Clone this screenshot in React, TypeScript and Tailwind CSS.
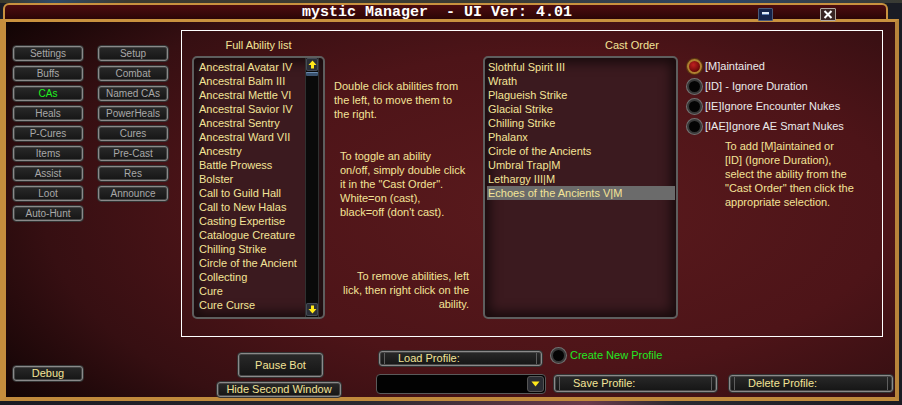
import React from "react";

const abilities = [
  "Ancestral Avatar IV",
  "Ancestral Balm III",
  "Ancestral Mettle VI",
  "Ancestral Savior IV",
  "Ancestral Sentry",
  "Ancestral Ward VII",
  "Ancestry",
  "Battle Prowess",
  "Bolster",
  "Call to Guild Hall",
  "Call to New Halas",
  "Casting Expertise",
  "Catalogue Creature",
  "Chilling Strike",
  "Circle of the Ancient",
  "Collecting",
  "Cure",
  "Cure Curse",
];

const castOrder = [
  "Slothful Spirit III",
  "Wrath",
  "Plagueish Strike",
  "Glacial Strike",
  "Chilling Strike",
  "Phalanx",
  "Circle of the Ancients",
  "Umbral Trap|M",
  "Lethargy III|M",
  "Echoes of the Ancients V|M",
];

const navButtons: { label: string; active?: boolean }[] = [
  { label: "Settings" },
  { label: "Setup" },
  { label: "Buffs" },
  { label: "Combat" },
  { label: "CAs", active: true },
  { label: "Named CAs" },
  { label: "Heals" },
  { label: "PowerHeals" },
  { label: "P-Cures" },
  { label: "Cures" },
  { label: "Items" },
  { label: "Pre-Cast" },
  { label: "Assist" },
  { label: "Res" },
  { label: "Loot" },
  { label: "Announce" },
  { label: "Auto-Hunt" },
];

function Btn({ children, className = "" }: { children: React.ReactNode; className?: string }) {
  return (
    <div
      className={`flex items-center justify-center rounded-[4px] border border-[#333] bg-[linear-gradient(#2a2a2a,#141414)] shadow-[inset_0_0_0_1px_#8a8a8a,inset_0_0_0_2px_#454545] ${className}`}
    >
      {children}
    </div>
  );
}

function ProfileBtn({ label, className = "" }: { label: string; className?: string }) {
  return (
    <div
      className={`flex rounded-[4px] border border-[#333] bg-[linear-gradient(#2a2a2a,#141414)] shadow-[inset_0_0_0_1px_#8a8a8a,inset_0_0_0_2px_#454545] ${className}`}
    >
      <div className="mx-[5px] my-[2px] flex flex-1 items-center border-x border-[#5e5e5e] pl-[13px] text-[11px] text-[#f3e497]">
        {label}
      </div>
    </div>
  );
}

function Radio({ selected = false }: { selected?: boolean }) {
  return selected ? (
    <div className="h-[15px] w-[15px] flex-none rounded-full border-2 border-[#b08030] bg-[radial-gradient(circle_at_40%_35%,#c02020,#6a0808_70%)] shadow-[0_0_0_1px_#5a3a10]" />
  ) : (
    <div className="h-[15px] w-[15px] flex-none rounded-full border-2 border-[#383838] bg-[#040404] shadow-[0_0_0_1px_#707070]" />
  );
}

function Arrow({ down = false }: { down?: boolean }) {
  return (
    <div className="flex h-[13px] w-[12px] items-center justify-center rounded-[2px] bg-[#2a2e36] shadow-[inset_0_0_0_1px_#454a55]">
      <svg width="9" height="9" viewBox="0 0 9 9" className={down ? "rotate-180" : ""}>
        <polygon points="4.5,0.5 8.5,5 6,5 6,8.5 3,8.5 3,5 0.5,5" fill="#ffe81a" />
      </svg>
    </div>
  );
}

function ListBox({
  items,
  width,
  scroll,
  selectedIndex,
  padLeft,
}: {
  items: string[];
  width: string;
  scroll?: boolean;
  selectedIndex?: number;
  padLeft: string;
}) {
  return (
    <div
      className={`${width} flex h-[263px] overflow-hidden rounded-[5px] border-2 border-[#5e5e5e] bg-[#3b1a1f] shadow-[inset_0_0_12px_5px_rgba(0,0,0,0.6)]`}
    >
      <div className="flex-1 overflow-hidden whitespace-nowrap pt-[2px] text-[11px] leading-[14px] text-[#f3e497]">
        {items.map((it, i) =>
          i === selectedIndex ? (
            <div key={it} className="mr-[1px] ml-[2px] bg-[#6b6b6b] pl-[1px]">
              {it}
            </div>
          ) : (
            <div key={it} className={padLeft}>
              {it}
            </div>
          )
        )}
      </div>
      {scroll && (
        <div className="mr-[4px] flex w-[14px] flex-col items-center justify-between border-x border-[#303030] bg-[#0a0a0a]">
          <div className="flex flex-col items-center">
            <Arrow />
            <div className="mt-[1px] h-[4px] w-[12px] rounded-[1px] bg-[#3b5370] shadow-[inset_0_1px_0_#6c8cb0]" />
          </div>
          <div className="mb-[1px]">
            <Arrow down />
          </div>
        </div>
      )}
    </div>
  );
}

export default function App() {
  return (
    <div className="relative h-[405px] w-[902px] overflow-hidden bg-[#1a1c24] font-['Liberation_Sans',Arial,sans-serif]">
      {/* background strip */}
      <div className="h-[3px] bg-[linear-gradient(90deg,#3a3828,#2e4a68_6%,#3c3a30_14%,#3a3a34_55%,#2c4566_80%,#3a3a32)]" />

      {/* title bar */}
      <div className="ml-[3px] flex h-[16px] w-[885px] items-center rounded-t-[6px] border-2 border-b-0 border-[#c9923f] bg-[linear-gradient(#4c0c0f,#2c0506)]">
        <div className="w-[297px] flex-none" />
        <div className="flex-none font-['Liberation_Mono',monospace] text-[15px] leading-none font-bold whitespace-pre text-white">
          mystic Manager  - UI Ver: 4.01
        </div>
        <div className="flex-1" />
        <div className="mt-[4px] flex h-[13px] w-[15px] flex-none items-start justify-center rounded-[1px] border border-[#4a5a78] bg-[#15234a] pt-[3px]">
          <div className="h-[2px] w-[7px] bg-[#dfe8f5] shadow-[0_1px_0_#5a7ab0]" />
        </div>
        <div className="w-[47px] flex-none" />
        <div className="mt-[4px] flex h-[13px] w-[16px] flex-none items-center justify-center rounded-[1px] border border-[#b0a8a0] bg-[#3a2624]">
          <svg width="10" height="9" viewBox="0 0 10 9">
            <path d="M1.5 1 L8.5 8 M8.5 1 L1.5 8" stroke="#ffffff" strokeWidth="2" />
          </svg>
        </div>
        <div className="w-[50px] flex-none" />
      </div>

      {/* main frame */}
      <div className="flex h-[382px] w-[899px] flex-col border-t-[3px] border-r-[4px] border-b-[4px] border-l-[6px] border-t-[#c9923f] border-r-[#b8843a] border-b-[#c08a3c] border-l-[#c48d3d] bg-[radial-gradient(ellipse_78%_88%_at_62%_50%,#5a1a1d_0%,#4d1418_48%,#360f12_74%,#0d0303_100%)]">
        {/* top row */}
        <div className="flex pt-[8px]">
          <div className="mt-[15px] ml-[6px] grid h-fit grid-cols-[72px_72px] gap-x-[13px] gap-y-[3px]">
            {navButtons.map((b) => (
              <Btn
                key={b.label}
                className={`h-[17px] text-[10px] leading-none ${b.active ? "text-[#1ff21f]" : "text-[#a8a8a8]"}`}
              >
                {b.label}
              </Btn>
            ))}
          </div>

          {/* white panel */}
          <div className="ml-[12px] flex h-[307px] w-[702px] border border-white pl-[10px] text-[11px] leading-[14px]">
            {/* full ability list */}
            <div className="flex w-[133px] flex-none flex-col">
              <div className="h-[25px] pt-[7px] text-center text-[#f3e497]">Full Ability list</div>
              <ListBox items={abilities} width="w-[133px]" scroll padLeft="pl-[5px]" />
            </div>

            {/* middle instructions */}
            <div className="ml-[9px] flex w-[136px] flex-none flex-col text-[#f3e497]">
              <div className="mt-[48px] whitespace-nowrap">
                <div>Double click abilities from</div>
                <div>the left, to move them to</div>
                <div>the right.</div>
              </div>
              <div className="mt-[28px] ml-[6px] w-[124px] whitespace-nowrap">
                <div>To toggle an ability</div>
                <div>on/off, simply double click</div>
                <div>it in the "Cast Order".</div>
                <div>White=on (cast),</div>
                <div>black=off (don't cast).</div>
              </div>
              <div className="mt-[50px] ml-[9px] flex w-[126px] flex-col items-end whitespace-nowrap">
                <div>To remove abilities, left</div>
                <div>lick, then right click on the</div>
                <div>ability.</div>
              </div>
            </div>

            {/* cast order */}
            <div className="ml-[13px] flex w-[195px] flex-none flex-col">
              <div className="h-[25px] pt-[7px] pl-[122px] whitespace-nowrap text-[#f3e497]">Cast Order</div>
              <ListBox items={castOrder} width="w-[195px]" selectedIndex={9} padLeft="pl-[3px]" />
            </div>

            {/* radio options */}
            <div className="ml-[9px] flex flex-1 flex-col pt-[25px]">
              {[
                { label: "[M]aintained", sel: true },
                { label: "[ID] - Ignore Duration" },
                { label: "[IE]Ignore Encounter Nukes" },
                { label: "[IAE]Ignore AE Smart Nukes" },
              ].map((r) => (
                <div key={r.label} className="flex h-[20px] items-center gap-[3px] whitespace-nowrap text-[#ebebeb]">
                  <Radio selected={r.sel} />
                  <span>{r.label}</span>
                </div>
              ))}
              <div className="mt-[3px] ml-[38px] whitespace-nowrap text-[#f3e497]">
                <div>To add [M]aintained or</div>
                <div>[ID] (Ignore Duration),</div>
                <div>select the ability from the</div>
                <div>"Cast Order" then click the</div>
                <div>appropriate selection.</div>
              </div>
            </div>
          </div>
        </div>

        {/* bottom row */}
        <div className="flex items-start text-[11px]">
          <Btn className="mt-[28px] ml-[6px] h-[17px] w-[72px] text-[#f3e497]">Debug</Btn>
          <div className="ml-[132px] flex w-[126px] flex-col items-center">
            <Btn className="mt-[15px] ml-[3px] h-[26px] w-[87px] text-[#f3e497]">Pause Bot</Btn>
            <Btn className="mt-[3px] h-[17px] w-[126px] text-[#f3e497]">Hide Second Window</Btn>
          </div>
          <div className="ml-[34px] flex w-[170px] flex-col">
            <ProfileBtn label="Load Profile:" className="mt-[13px] ml-[2px] h-[17px] w-[165px]" />
            <div className="mt-[7px] flex h-[20px] w-[170px] items-center justify-end rounded-[4px] border border-[#5a5a5a] bg-[#020202] pr-[1px]">
              <div className="flex h-[16px] w-[17px] items-center justify-center rounded-[3px] border border-[#555] bg-[#2a2c32]">
                <svg width="9" height="6" viewBox="0 0 9 6">
                  <polygon points="0.5,0.5 8.5,0.5 4.5,5.5" fill="#ffe81a" />
                </svg>
              </div>
            </div>
          </div>
          <div className="ml-[5px] flex flex-col">
            <div className="mt-[10px] flex h-[16px] items-center gap-[4px] whitespace-nowrap text-[#22e822]">
              <Radio />
              <span>Create New Profile</span>
            </div>
            <ProfileBtn label="Save Profile:" className="mt-[11px] ml-[2px] h-[19px] w-[165px]" />
          </div>
          <ProfileBtn label="Delete Profile:" className="mt-[37px] ml-[10px] h-[19px] w-[166px]" />
        </div>
      </div>
      <div className="h-[4px] bg-[linear-gradient(90deg,#1a1a22,#2a2a30_40%,#6a3a4a_65%,#2a2a30_75%,#1a1a22)]" />
    </div>
  );
}
